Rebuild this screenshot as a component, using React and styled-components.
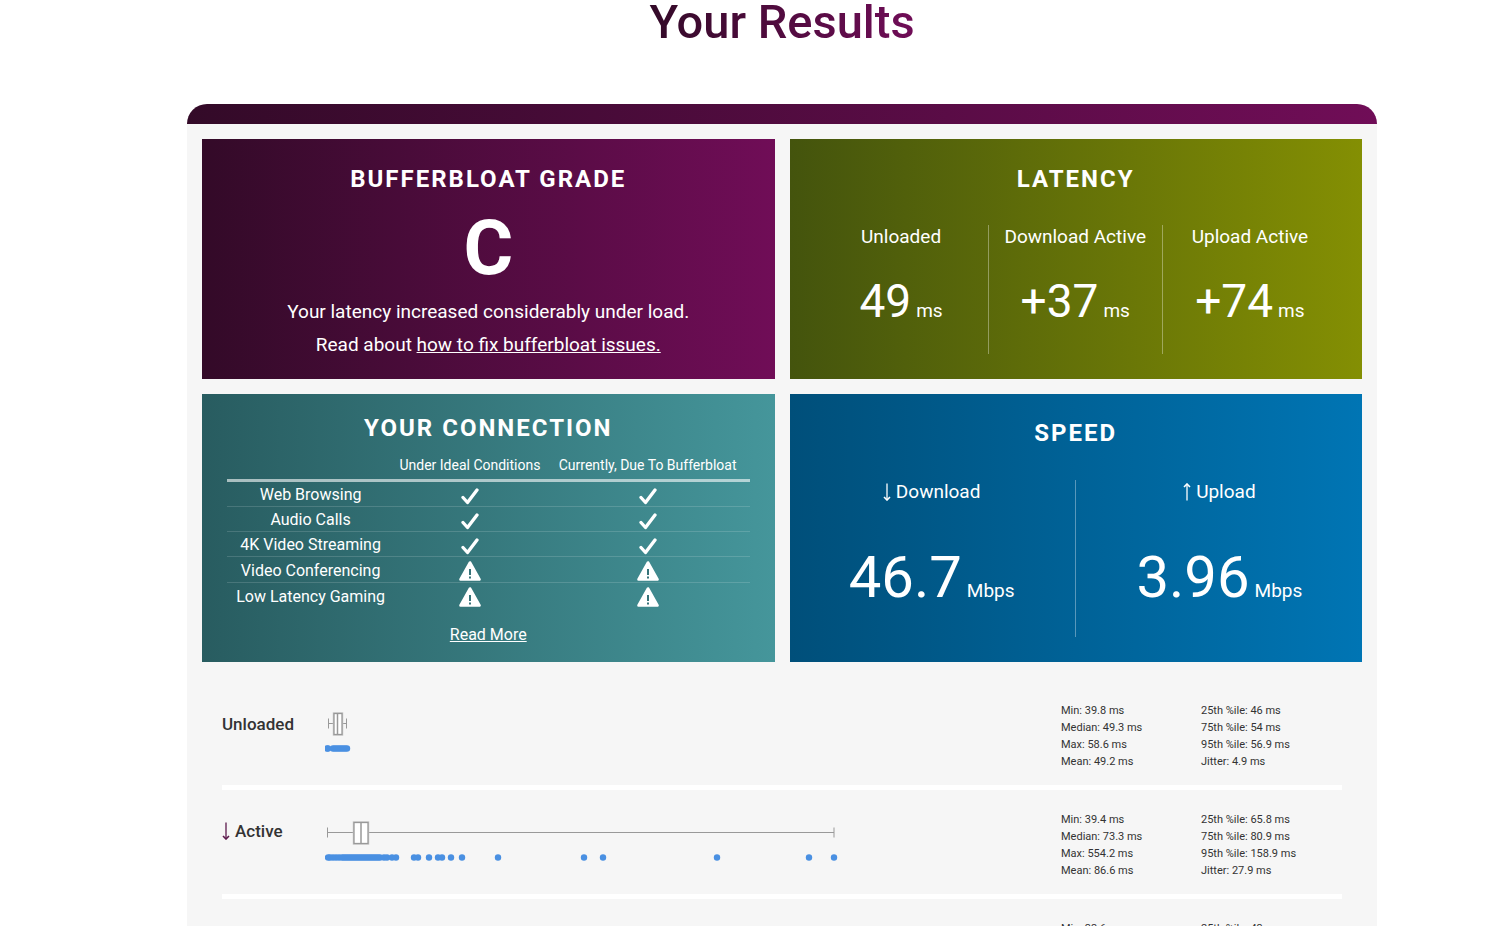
import React from 'react';
import styled, { createGlobalStyle } from 'styled-components';

const GlobalStyle = createGlobalStyle`
  *, *::before, *::after { box-sizing: border-box; }
  html { background: #fff; }
  body {
    margin: 0;
    color: #333;
    font-family: Roboto, 'Open Sans', sans-serif;
    font-size: 17px;
  }
`;

const gradients = {
  plum: 'linear-gradient(90deg, #330a28, #700d57)',
  olive: 'linear-gradient(90deg, #44540d, #848f03)',
  teal: 'linear-gradient(90deg, #285c60, #45969b)',
  blue: 'linear-gradient(90deg, #004f7a, #0075b4)',
};

const Page = styled.main`
  height: 100vh;
  overflow: hidden;
  padding-left: 56px;
`;

const PageTitle = styled.h1`
  width: fit-content;
  margin: 0 auto 61px;
  font-size: 47px;
  line-height: 43px;
  font-weight: 500;
  color: transparent;
  background: ${gradients.plum};
  background-clip: text;
`;

const Results = styled.section`
  max-width: 1190px;
  margin: 0 auto;
  background: #f6f6f6;
  border-radius: 20px 20px 0 0;
  overflow: hidden;
`;

const Band = styled.div`
  height: 20px;
  background: ${gradients.plum};
`;

const Cards = styled.div`
  display: grid;
  grid-template-columns: 1fr 1fr;
  gap: 15px;
  padding: 15px 15px 19px;
`;

const Card = styled.article`
  padding: ${(p) => p.$pad};
  color: #fff;
  text-align: center;
  background: ${(p) => gradients[p.$tone]};
`;

const CardTitle = styled.h2`
  margin: 0 0 ${(p) => p.$gap}px;
  font-size: 24px;
  line-height: 30px;
  font-weight: 700;
  letter-spacing: 2px;
  text-transform: uppercase;
`;

const Grade = styled.div`
  margin-bottom: 5px;
  font-size: 76px;
  line-height: 84px;
  font-weight: 700;
`;

const Summary = styled.p`
  margin: 0;
  font-size: 19px;
  line-height: 33px;
`;

const Link = styled.a`
  color: inherit;
  text-decoration: underline;
`;

const Metrics = styled.div`
  display: grid;
  grid-auto-flow: column;
  grid-auto-columns: 1fr;
`;

const Metric = styled.div`
  padding-bottom: ${(p) => (p.$large ? 30 : 28)}px;

  &:not(:last-child) {
    padding-right: ${(p) => (p.$large ? 26 : 0)}px;
    border-right: 1px solid rgba(255, 255, 255, 0.35);
  }
  &:last-child { padding-left: ${(p) => (p.$large ? 26 : 0)}px; }
`;

const MetricLabel = styled.div`
  display: flex;
  justify-content: center;
  align-items: center;
  gap: 5px;
  margin-bottom: ${(p) => (p.$large ? 43 : 27)}px;
  font-size: 19px;
  line-height: 24px;
`;

const MetricValue = styled.div`
  font-size: ${(p) => (p.$large ? 58 : 46)}px;
  line-height: ${(p) => (p.$large ? 60 : 50)}px;
`;

const Unit = styled.span`
  margin-left: 5px;
  font-size: 19px;
  line-height: 20px;
`;

const ConnectionTable = styled.table`
  width: 100%;
  margin-bottom: 14px;
  table-layout: fixed;
  border-collapse: separate;
  border-spacing: 0;

  th, td { padding: 0; font-weight: 400; text-align: center; }
  thead th, thead td {
    padding-bottom: 2px;
    font-size: 14px;
    line-height: 24px;
    border-bottom: 3px solid rgba(255, 255, 255, 0.6);
  }
  tbody th {
    padding-top: 2px;
    font-size: 16px;
    line-height: 22px;
  }
  tbody th, tbody td {
    height: 25px;
    border-bottom: 1px solid rgba(255, 255, 255, 0.15);
  }
  tbody tr:last-child > * { border-bottom-color: transparent; }
  svg { display: block; margin: 3px auto 0; }
`;

const ReadMore = styled(Link)`
  display: block;
  font-size: 16px;
  line-height: 24px;
`;

const ResultRow = styled.div`
  display: grid;
  grid-template-columns: 103px 1fr 140px 141px;
  margin: 0 35px;
  padding: 21px 0 15px;
  border-bottom: 5px solid #fff;
`;

const RowLabel = styled.h3`
  display: flex;
  align-items: center;
  gap: 5px;
  height: ${(p) => (p.$withArrow ? 40 : 44)}px;
  margin: 0;
  font-size: 17px;
  font-weight: 500;
`;

const Plot = styled.svg`
  display: block;
  width: 100%;
  height: 68px;
`;

const Stats = styled.ul`
  margin: 0;
  padding: 0;
  list-style: none;
  font-size: 11px;
  line-height: 17px;
`;

function Arrow({ up, color = 'currentColor' }) {
  return (
    <svg width="8" height="18" viewBox="0 0 8 18" aria-hidden="true" fill="none" stroke={color}>
      <g transform={up ? 'rotate(180 4 9)' : undefined}>
        <path d="M4 .5v16" strokeWidth="1.3" />
        <path d="M1 14l3 3 3-3" strokeWidth="1.600" />
      </g>
    </svg>
  );
}

function Check() {
  return (
    <svg width="18" height="20" viewBox="0 0 18 20" role="img" aria-label="Good">
      <path d="M2 11.500l4.500 5L16 4" fill="none" stroke="#fff" strokeWidth="3.300" strokeLinecap="round" strokeLinejoin="round" />
    </svg>
  );
}

function Warning() {
  return (
    <svg width="22" height="22" viewBox="0 0 22 22" role="img" aria-label="Problem">
      <path d="M11 2.500L20.500 19.500h-19z" fill="#fff" stroke="#fff" strokeWidth="2.600" strokeLinejoin="round" />
      <path d="M11 9v6M11 16.500v2" fill="none" stroke="#357379" strokeWidth="2" />
    </svg>
  );
}

const uses = [
  ['Web Browsing', true],
  ['Audio Calls', true],
  ['4K Video Streaming', true],
  ['Video Conferencing', false],
  ['Low Latency Gaming', false],
];

const unloaded = {
  low: 3.5, q1: 9, median: 12.5, q3: 17, high: 21.5,
  dots: [2, 3, 8, 10, 12, 14, 16, 18, 20, 22],
};

const active = {
  low: 2.5, q1: 29, median: 36, q3: 43, high: 509,
  dots: [
    3, 5, 8, 11, 14, 17, 19, 21, 23, 25, 27, 29, 31, 33, 35, 37, 39, 41, 43, 45, 47, 49, 51, 53, 55,
    59, 62, 67, 71, 89, 93, 104, 113, 117, 126, 137, 173, 259, 278, 392, 484, 509,
  ],
};

function BoxPlot({ data, label }) {
  return (
    <Plot role="img" aria-label={label}>
      <g fill="none" stroke="#999" strokeWidth="1">
        <path d={`M${data.low} 21.500H${data.high}M${data.low} 16.500v10M${data.high} 16.500v10`} />
        <rect x={data.q1} y="11.500" width={data.q3 - data.q1} height="21" stroke="#ccc" strokeWidth="2.500" />
        <rect x={data.q1} y="11.500" width={data.q3 - data.q1} height="21" fill="#fff" stroke="#999" strokeWidth="1.300" />
        <path d={`M${data.median} 12v20`} strokeWidth="1.500" />
      </g>
      <g fill="#4a90e2">
        {data.dots.map((x) => <circle key={x} cx={x} cy="46.500" r="3.200" />)}
      </g>
    </Plot>
  );
}

const rows = [
  {
    name: 'Unloaded', data: unloaded,
    left: ['Min: 39.8 ms', 'Median: 49.3 ms', 'Max: 58.6 ms', 'Mean: 49.2 ms'],
    right: ['25th %ile: 46 ms', '75th %ile: 54 ms', '95th %ile: 56.9 ms', 'Jitter: 4.9 ms'],
  },
  {
    name: 'Active', arrow: 'down', data: active,
    left: ['Min: 39.4 ms', 'Median: 73.3 ms', 'Max: 554.2 ms', 'Mean: 86.6 ms'],
    right: ['25th %ile: 65.8 ms', '75th %ile: 80.9 ms', '95th %ile: 158.9 ms', 'Jitter: 27.9 ms'],
  },
  { left: ['Min: 33.6 ms'], right: ['25th %ile: 43 ms'] },
];

function MetricBlock({ label, arrow, value, unit, large }) {
  return (
    <Metric $large={large}>
      <MetricLabel $large={large}>
        {arrow && <Arrow up={arrow === 'up'} />}
        {label}
      </MetricLabel>
      <MetricValue $large={large}>{value}<Unit>{unit}</Unit></MetricValue>
    </Metric>
  );
}

export default function App() {
  return (
    <Page>
      <GlobalStyle />
      <PageTitle>Your Results</PageTitle>
      <Results>
        <Band />
        <Cards>
          <Card $tone="plum" $pad="25px 25px 18px">
            <CardTitle $gap={12}>Bufferbloat Grade</CardTitle>
            <Grade>C</Grade>
            <Summary>Your latency increased considerably under load.</Summary>
            <Summary>Read about <Link href="#fix">how to fix bufferbloat issues.</Link></Summary>
          </Card>
          <Card $tone="olive" $pad="25px">
            <CardTitle $gap={31}>Latency</CardTitle>
            <Metrics>
              <MetricBlock label="Unloaded" value="49" unit="ms" />
              <MetricBlock label="Download Active" value="+37" unit="ms" />
              <MetricBlock label="Upload Active" value="+74" unit="ms" />
            </Metrics>
          </Card>
          <Card $tone="teal" $pad="19px 25px 15px">
            <CardTitle $gap={10}>Your Connection</CardTitle>
            <ConnectionTable>
              <colgroup>
                <col width="32%" />
                <col width="29%" />
                <col width="39%" />
              </colgroup>
              <thead>
                <tr>
                  <td />
                  <th scope="col">Under Ideal Conditions</th>
                  <th scope="col">Currently, Due To Bufferbloat</th>
                </tr>
              </thead>
              <tbody>
                {uses.map(([name, good]) => (
                  <tr key={name}>
                    <th scope="row">{name}</th>
                    <td>{good ? <Check /> : <Warning />}</td>
                    <td>{good ? <Check /> : <Warning />}</td>
                  </tr>
                ))}
              </tbody>
            </ConnectionTable>
            <ReadMore href="#more">Read More</ReadMore>
          </Card>
          <Card $tone="blue" $pad="24px 25px 25px">
            <CardTitle $gap={32}>Speed</CardTitle>
            <Metrics>
              <MetricBlock large arrow="down" label="Download" value="46.7" unit="Mbps" />
              <MetricBlock large arrow="up" label="Upload" value="3.96" unit="Mbps" />
            </Metrics>
          </Card>
        </Cards>
        {rows.map((row, i) => (
          <ResultRow key={i}>
            <RowLabel as={row.name ? 'h3' : 'div'} $withArrow={Boolean(row.arrow)}>
              {row.arrow && <Arrow color="#5c1a4c" />}
              {row.name}
            </RowLabel>
            {row.data ? <BoxPlot data={row.data} label={`${row.name} latency distribution`} /> : <Plot aria-hidden="true" />}
            <Stats>{row.left.map((s) => <li key={s}>{s}</li>)}</Stats>
            <Stats>{row.right.map((s) => <li key={s}>{s}</li>)}</Stats>
          </ResultRow>
        ))}
      </Results>
    </Page>
  );
}
